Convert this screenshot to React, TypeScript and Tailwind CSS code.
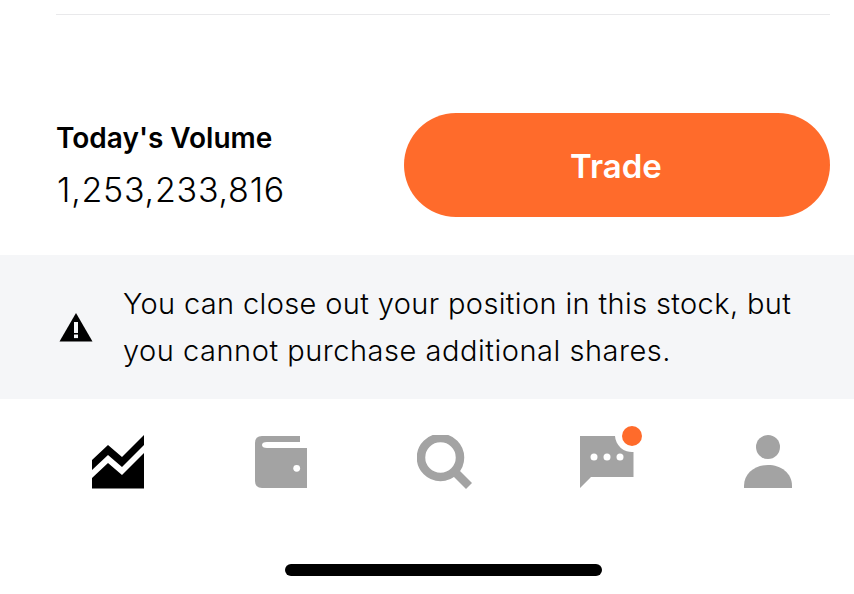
const sans = { fontFamily: "Inter, 'Liberation Sans', sans-serif" };

function ChartIcon() {
  return (
    <svg width="52" height="54" viewBox="0 0 52 54" fill="#000">
      <path d="M0 25 L16 10 L30 22 L52 0 V10 L30 32 L16 20 L0 35 Z" />
      <path d="M0 43 L16 28 L30 40 L52 18 V53.5 H0 Z" />
    </svg>
  );
}

function WalletIcon() {
  return (
    <svg width="52" height="54" viewBox="0 0 52 54">
      <path fill="#a3a3a3" d="M7 1 H45 V7 H12 Q7 7 7 10 Q7 13 12 13 H52 V53 H7 Q0 53 0 46 V8 Q0 1 7 1 Z" />
      <circle cx="41.7" cy="33.3" r="3.4" fill="#fff" />
    </svg>
  );
}

function SearchIcon() {
  return (
    <svg width="56" height="54" viewBox="0 0 56 54" fill="none" stroke="#a3a3a3">
      <circle cx="23.5" cy="22.5" r="19.5" strokeWidth="8.5" />
      <path d="M38 37 L52 51" strokeWidth="8.5" />
    </svg>
  );
}

function ChatIcon() {
  return (
    <svg width="56" height="54" viewBox="0 0 56 54">
      <path fill="#a3a3a3" d="M1 1 H36 A17 17 0 0 0 54.5 17 V42 H12 L1 53 Z" />
      <circle cx="15" cy="22" r="3.5" fill="#fff" />
      <circle cx="28" cy="22" r="3.5" fill="#fff" />
      <circle cx="41" cy="22" r="3.5" fill="#fff" />
    </svg>
  );
}

function PersonIcon() {
  return (
    <svg width="48" height="54" viewBox="0 0 48 54" fill="#a3a3a3">
      <circle cx="24" cy="12" r="12" />
      <path d="M0 53 V51 C0 38 11 30 24 30 C37 30 48 38 48 51 V53 Z" />
    </svg>
  );
}

function WarningIcon() {
  return (
    <svg width="34" height="29" viewBox="0 0 34 29">
      <path d="M17 0 L33.5 28.5 H0.5 Z" fill="#000" />
      <rect x="15" y="9" width="4" height="11" fill="#f5f6f8" />
      <rect x="15" y="21.5" width="4" height="3.6" fill="#f5f6f8" />
    </svg>
  );
}

export default function App() {
  return (
    <div className="w-[854px] h-[594px] bg-white overflow-hidden text-black flex flex-col" style={sans}>
      <div className="mx-[56px] mt-[14px] w-[774px] h-px bg-[#e9e9eb]" />

      <div className="mt-[98px] ml-[57px] mr-[24px] flex items-center justify-between h-[104px]">
        <div className="flex flex-col">
          <div className="text-[28px] leading-[36px] font-semibold -mt-[1px] -ml-[1px]">Today's Volume</div>
          <div className="mt-[14px] text-[34px] leading-[40px] font-light tracking-[0.75px]">1,253,233,816</div>
        </div>
        <button className="w-[426px] h-[104px] rounded-full bg-[#ff6b2b] text-white text-[33px] font-semibold pt-[3px] pr-[2px]">
          Trade
        </button>
      </div>

      <div className="mt-[38px] h-[144px] bg-[#f5f6f8] flex items-center pl-[59px]">
        <WarningIcon />
        <div className="ml-[30px] text-[29px] leading-[47px] font-light text-black">
          <div className="tracking-[0.36px]">You can close out your position in this stock, but</div>
          <div className="tracking-[0.52px]">you cannot purchase additional shares.</div>
        </div>
      </div>

      <div className="flex items-center pl-[92px] mt-[36px] h-[54px]">
        <ChartIcon />
        <div className="ml-[111px]"><WalletIcon /></div>
        <div className="ml-[110px]"><SearchIcon /></div>
        <div className="relative ml-[106px]">
          <ChatIcon />
          <div className="absolute -top-[9px] left-[43px] w-[20px] h-[20px] rounded-full bg-[#ff6b2b]" />
        </div>
        <div className="ml-[109px]"><PersonIcon /></div>
      </div>

      <div className="mt-[75px] ml-[285px] w-[317px] h-[12px] rounded-full bg-black" />
    </div>
  );
}
